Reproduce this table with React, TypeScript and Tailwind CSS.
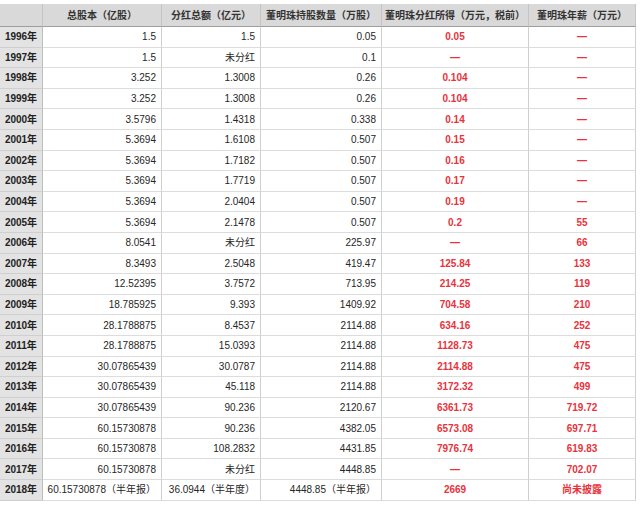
const headers = [
  "",
  "总股本（亿股）",
  "分红总额（亿元）",
  "董明珠持股数量（万股）",
  "董明珠分红所得（万元，税前）",
  "董明珠年薪（万元）",
];

const rows: string[][] = [
  ["1996年", "1.5", "1.5", "0.05", "0.05", "—"],
  ["1997年", "1.5", "未分红", "0.1", "—", "—"],
  ["1998年", "3.252", "1.3008", "0.26", "0.104", "—"],
  ["1999年", "3.252", "1.3008", "0.26", "0.104", "—"],
  ["2000年", "3.5796", "1.4318", "0.338", "0.14", "—"],
  ["2001年", "5.3694", "1.6108", "0.507", "0.15", "—"],
  ["2002年", "5.3694", "1.7182", "0.507", "0.16", "—"],
  ["2003年", "5.3694", "1.7719", "0.507", "0.17", "—"],
  ["2004年", "5.3694", "2.0404", "0.507", "0.19", "—"],
  ["2005年", "5.3694", "2.1478", "0.507", "0.2", "55"],
  ["2006年", "8.0541", "未分红", "225.97", "—", "66"],
  ["2007年", "8.3493", "2.5048", "419.47", "125.84", "133"],
  ["2008年", "12.52395", "3.7572", "713.95", "214.25", "119"],
  ["2009年", "18.785925", "9.393", "1409.92", "704.58", "210"],
  ["2010年", "28.1788875", "8.4537", "2114.88", "634.16", "252"],
  ["2011年", "28.1788875", "15.0393", "2114.88", "1128.73", "475"],
  ["2012年", "30.07865439", "30.0787", "2114.88", "2114.88", "475"],
  ["2013年", "30.07865439", "45.118", "2114.88", "3172.32", "499"],
  ["2014年", "30.07865439", "90.236", "2120.67", "6361.73", "719.72"],
  ["2015年", "60.15730878", "90.236", "4382.05", "6573.08", "697.71"],
  ["2016年", "60.15730878", "108.2832", "4431.85", "7976.74", "619.83"],
  ["2017年", "60.15730878", "未分红", "4448.85", "—", "702.07"],
  ["2018年", "60.15730878（半年报）", "36.0944（半年度）", "4448.85（半年报）", "2669", "尚未披露"],
];

const font = { fontFamily: '"Liberation Sans", "Noto Sans CJK SC", sans-serif' };

export default function App() {
  return (
    <div className="w-[640px] h-[505px] bg-white pt-[4px]" style={font}>
      <div className="grid w-[636px] grid-cols-[43px_119px_99px_121px_147px_107px] grid-rows-[23px_repeat(23,20.6px)] text-[10px] text-[#262626]">
        {headers.map((h, i) => (
          <div
            key={"h" + i}
            className="flex items-center justify-center bg-[#d9d9d9] border-b border-b-[#9e9e9e] border-r border-r-[#c4c4c4] font-bold text-[#333] whitespace-nowrap"
          >
            {h}
          </div>
        ))}
        {rows.map((r) =>
          r.map((c, i) => {
            if (i === 0)
              return (
                <div
                  key={r[0] + i}
                  className="flex items-center justify-center bg-[#e3e3e3] border-b border-b-[#cfcfcf] border-r border-r-[#bdbdbd] font-bold text-[#222]"
                >
                  {c}
                </div>
              );
            if (i >= 4)
              return (
                <div
                  key={r[0] + i}
                  className="flex items-center justify-center border-b border-b-[#dcdcdc] border-r border-r-[#cfcfcf] font-bold text-[#e8333c] whitespace-nowrap"
                >
                  {c}
                </div>
              );
            return (
              <div
                key={r[0] + i}
                className="flex items-center justify-end pr-[5px] border-b border-b-[#dcdcdc] border-r border-r-[#cfcfcf] whitespace-nowrap"
              >
                {c}
              </div>
            );
          })
        )}
      </div>
    </div>
  );
}
